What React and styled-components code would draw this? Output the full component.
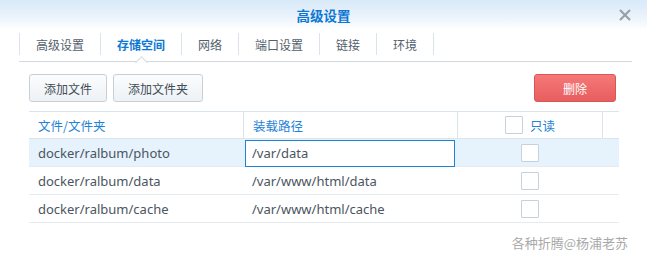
import React from 'react';
import styled, { createGlobalStyle } from 'styled-components';

const GlobalStyle = createGlobalStyle`
  html, body {
    margin: 0;
    padding: 0;
    background: #fff;
  }
  body {
    font-family: "Noto Sans", "Noto Sans CJK SC", sans-serif;
    font-size: 13px;
    color: #4b5561;
  }
`;

const Dialog = styled.div`
  width: 647px;
  height: 267px;
  display: flex;
  flex-direction: column;
  background: #fff;
`;

const Header = styled.div`
  height: 30px;
  display: grid;
  grid-template-columns: 1fr auto 1fr;
  align-items: center;
  background: linear-gradient(to bottom, #d8e9f8 0%, #eaf3fb 55%, #ffffff 100%);
`;

const Title = styled.div`
  grid-column: 2;
  color: #0d78d4;
  font-weight: bold;
  font-size: 13.5px;
  font-family: "Noto Sans CJK SC", sans-serif;
`;

const Close = styled.div`
  justify-self: end;
  margin-right: 16px;
  width: 12px;
  height: 12px;
  display: flex;
  color: #9aa0a6;
`;

const TabBar = styled.div`
  margin: 0 15px 0 19px;
  height: 31px;
  display: flex;
  align-items: flex-start;
  border-bottom: 1px solid #d3d9df;
`;

const Tab = styled.div`
  position: relative;
  margin-top: 3px;
  height: 22px;
  padding: 0 16px;
  border-left: 1px solid #dbe3ea;
  display: flex;
  align-items: center;
  font-family: "Noto Sans CJK SC", sans-serif;
  font-size: 12px;
  color: ${p => (p.$active ? '#0d78d4' : '#54606c')};
  font-weight: ${p => (p.$active ? 'bold' : 'normal')};
  &:last-child {
    border-right: 1px solid #dbe3ea;
  }
`;

const Caret = styled.span`
  position: absolute;
  left: 50%;
  bottom: -12px;
  width: 8px;
  height: 8px;
  margin-left: -4px;
  background: #fff;
  border-top: 1px solid #d3d9df;
  border-left: 1px solid #d3d9df;
  transform: rotate(45deg);
`;

const Toolbar = styled.div`
  margin-top: 12px;
  padding: 0 31px 0 29px;
  display: flex;
  gap: 6px;
`;

const Button = styled.button`
  height: 28px;
  padding: 0 ${p => p.$pad || 14}px;
  border-radius: 3px;
  font-family: "Noto Sans CJK SC", sans-serif;
  font-size: 12px;
  cursor: pointer;
  border: 1px solid #c7d0d8;
  background: linear-gradient(to bottom, #fbfcfd, #eef2f5);
  color: #3f4b57;
`;

const DangerButton = styled(Button)`
  margin-left: auto;
  width: 82px;
  border-color: #d85656;
  background: linear-gradient(to bottom, #f67878, #e75e5e);
  color: #fff;
`;

const Table = styled.div`
  margin: 9px 28px 0 29px;
  display: grid;
  grid-template-columns: 214px 214px 145px 17px;
`;

const HeadCell = styled.div`
  height: 26px;
  display: flex;
  align-items: center;
  justify-content: ${p => (p.$center ? 'center' : 'flex-start')};
  gap: 7px;
  padding-left: ${p => (p.$center ? 0 : 9)}px;
  border-top: 1px solid #dce4eb;
  border-bottom: 1px solid #dce4eb;
  border-left: ${p => (p.$first ? 'none' : '1px solid #dce4eb')};
  color: #1f83d6;
  font-family: "Noto Sans CJK SC", sans-serif;
  font-size: 12.5px;
`;

const Cell = styled.div`
  height: 27px;
  display: flex;
  align-items: center;
  justify-content: ${p => (p.$center ? 'center' : 'flex-start')};
  padding-left: ${p => (p.$center || p.$edit ? 0 : 9)}px;
  padding-right: ${p => (p.$edit ? 2 : 0)}px;
  padding-left: ${p => (p.$edit ? 2 : p.$center ? 0 : 9)}px;
  border-bottom: 1px solid #e4ebf1;
  background: ${p => (p.$selected ? '#e6f2fc' : '#fff')};
  color: #4b5561;
  font-size: 13px;
`;

const PathInput = styled.input`
  width: 100%;
  height: 27px;
  box-sizing: border-box;
  margin-top: 1px;
  padding: 0 6px;
  border: 1px solid #1a83d8;
  outline: none;
  background: #fff;
  font-family: "Noto Sans", sans-serif;
  font-size: 13px;
  color: #4b5561;
`;

const Check = styled.span`
  width: 16px;
  height: 16px;
  border: 1px solid #c5d1dc;
  border-radius: 1px;
  background: #fff;
`;

const Watermark = styled.div`
  margin-top: 10px;
  padding-right: 19px;
  text-align: right;
  color: #a9a9a9;
  font-family: "Noto Sans CJK SC", sans-serif;
  font-size: 13px;
`;

const tabs = ['高级设置', '存储空间', '网络', '端口设置', '链接', '环境'];

const rows = [
  { folder: 'docker/ralbum/photo', path: '/var/data', editing: true },
  { folder: 'docker/ralbum/data', path: '/var/www/html/data' },
  { folder: 'docker/ralbum/cache', path: '/var/www/html/cache' },
];

const App = () => {
  return (
    <Dialog>
      <GlobalStyle />
      <Header>
        <Title>高级设置</Title>
        <Close>
          <svg width="12" height="12" viewBox="0 0 12 12">
            <path d="M1 1 L11 11 M11 1 L1 11" stroke="currentColor" strokeWidth="2.2" />
          </svg>
        </Close>
      </Header>
      <TabBar>
        {tabs.map((t, i) => (
          <Tab key={t} $active={i === 1}>
            {t}
            {i === 1 && <Caret />}
          </Tab>
        ))}
      </TabBar>
      <Toolbar>
        <Button $pad={14}>添加文件</Button>
        <Button $pad={14}>添加文件夹</Button>
        <DangerButton>删除</DangerButton>
      </Toolbar>
      <Table>
        <HeadCell $first>文件/文件夹</HeadCell>
        <HeadCell>装载路径</HeadCell>
        <HeadCell $center>
          <Check />
          只读
        </HeadCell>
        <HeadCell />
        {rows.map(r => (
          <React.Fragment key={r.folder}>
            <Cell $selected={r.editing}>{r.folder}</Cell>
            {r.editing ? (
              <Cell $selected $edit>
                <PathInput defaultValue={r.path} />
              </Cell>
            ) : (
              <Cell>{r.path}</Cell>
            )}
            <Cell $selected={r.editing} $center>
              <Check />
            </Cell>
            <Cell $selected={r.editing} />
          </React.Fragment>
        ))}
      </Table>
      <Watermark>各种折腾@杨浦老苏</Watermark>
    </Dialog>
  );
};

export default App;
